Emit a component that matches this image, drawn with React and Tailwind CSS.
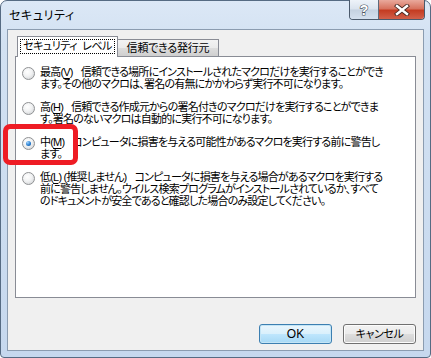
import React from 'react'

const Radio = ({ checked }) => (
  <div className="relative w-[13px] h-[13px] shrink-0 rounded-full border border-[#8f9193] bg-[radial-gradient(circle_at_40%_35%,#ffffff_0%,#f1f2f3_45%,#c9cbce_100%)]">
    {checked && (
      <div className="absolute left-[3px] top-[3px] w-[5px] h-[5px] rounded-full bg-[radial-gradient(circle_at_35%_30%,#9fd3ff_0%,#2a7fd0_55%,#0c4b93_100%)]" />
    )}
  </div>
)

const Key = ({ children }) => <span className="underline underline-offset-2">{children}</span>

const Option = ({ checked, children }) => (
  <div className="flex items-start">
    <div className="mt-[1px]">
      <Radio checked={checked} />
    </div>
    <div className="ml-[5px] leading-[12px] whitespace-nowrap">{children}</div>
  </div>
)

export default function App() {
  return (
    <div className="w-[431px] h-[358px] bg-white font-['Liberation_Sans','Noto_Sans_CJK_JP',sans-serif] text-[12px] text-black [font-feature-settings:'palt'] relative">
      {/* window frame */}
      <div className="w-[431px] h-[358px] rounded-t-[7px] rounded-b-[4px] border border-[#566b83] bg-[linear-gradient(180deg,#dce8f6_0%,#d2e1f2_12%,#c6d8ee_100%)] px-[6px] pb-[6px] flex flex-col">
        {/* title bar */}
        <div className="h-[28px] flex items-start relative">
          <div className="pl-[2px] pt-[6px] text-[12px] tracking-[0.6px]">セキュリティ</div>
          <div className="absolute right-[-1px] top-[-1px] flex h-[20px] rounded-b-[4px] border border-t-0 border-[#4b5a6c] overflow-hidden">
            <div className="w-[29px] h-full flex items-center justify-center border-r border-[#5d6b7c] bg-[linear-gradient(180deg,#eef3f9_0%,#dae3ee_48%,#c4d1e0_52%,#d4e0ee_100%)]">
              <svg width="12" height="14" viewBox="0 0 12 14">
                <text x="6" y="12" textAnchor="middle" fontSize="14" fontWeight="bold" fontFamily="Liberation Sans, sans-serif" fill="#ffffff" stroke="#4b5663" strokeWidth="1.2" paintOrder="stroke">?</text>
              </svg>
            </div>
            <div className="w-[45px] h-full flex items-center justify-center bg-[linear-gradient(180deg,#e9a99c_0%,#d7735f_45%,#c43c22_55%,#d2604a_100%)]">
              <svg width="16" height="12" viewBox="0 0 16 12">
                <path d="M3 2 L13 10 M13 2 L3 10" stroke="#4a2a24" strokeWidth="4.2" strokeLinecap="square" />
                <path d="M3 2 L13 10 M13 2 L3 10" stroke="#ffffff" strokeWidth="2.4" strokeLinecap="square" />
              </svg>
            </div>
          </div>
        </div>

        {/* client area */}
        <div className="flex-1 border border-[#8b9cb0] bg-[#f0f0f0] px-[7px] pt-[6px] flex flex-col">
          {/* tabs */}
          <div className="flex items-end h-[20px] pl-[2px] relative z-10">
            <div className="h-[21px] w-[101px] mb-[-1px] bg-white border border-b-0 border-[#898c95] flex items-start justify-center pt-[2px]">
              <div className="border border-dotted border-black h-[15px] leading-[13px] text-[11px] tracking-[-0.5px] w-[95px] text-center whitespace-nowrap">セキュリティ&nbsp;&nbsp;レベル</div>
            </div>
            <div className="h-[17px] w-[102px] ml-[-1px] bg-[linear-gradient(180deg,#f3f3f3_0%,#ebebeb_50%,#dddddd_51%,#cfcfcf_100%)] border border-b-0 border-[#898c95] flex items-center justify-center leading-[14px] text-[11px] tracking-[-0.2px] whitespace-nowrap">信頼できる発行元</div>
          </div>

          {/* panel */}
          <div className="h-[242px] bg-white border border-[#898c95] pl-[6px] pt-[9px] flex flex-col gap-[11px] text-[11px] tracking-[-0.8px]">
            <Option>
              最高(<Key>V</Key>)<span className="ml-[8px]">信頼できる場所にインストールされたマクロだけを実行することができ</span>
              <br />
              ます。その他のマクロは、署名の有無にかかわらず実行不可になります。
            </Option>
            <Option>
              高(<Key>H</Key>)<span className="ml-[8px]">信頼できる作成元からの署名付きのマクロだけを実行することができま</span>
              <br />
              す。署名のないマクロは自動的に実行不可になります。
            </Option>
            <Option checked>
              中(<Key>M</Key>)<span className="ml-[8px]">コンピュータに損害を与える可能性があるマクロを実行する前に警告し</span>
              <br />
              ます。
            </Option>
            <Option>
              低(<Key>L</Key>) (推奨しません)<span className="ml-[8px]">コンピュータに損害を与える場合があるマクロを実行する</span>
              <br />
              前に警告しません。ウイルス検索プログラムがインストールされているか、すべて
              <br />
              のドキュメントが安全であると確認した場合のみ設定してください。
            </Option>
          </div>

          {/* buttons */}
          <div className="flex justify-end gap-[11px] mt-[26px]">
            <button className="w-[73px] h-[20px] rounded-[3px] border border-[#3c7fb1] bg-[linear-gradient(180deg,#eaf6fd_0%,#d9f0fc_50%,#bee6fd_51%,#a7d9f5_100%)] shadow-[inset_0_0_0_1px_#c4e5f6] text-[12px] leading-[18px]">OK</button>
            <button className="w-[73px] h-[20px] rounded-[3px] border border-[#707070] bg-[linear-gradient(180deg,#f2f2f2_0%,#ebebeb_50%,#dddddd_51%,#cfcfcf_100%)] shadow-[inset_0_0_0_1px_#fcfcfc] text-[11px] leading-[18px] tracking-[-0.4px]">キャンセル</button>
          </div>
        </div>
      </div>

      {/* red annotation */}
      <div className="absolute left-[3px] top-[124px] w-[75px] h-[41px] rounded-[7px] border-[5px] border-[#ee1c24]" />
    </div>
  )
}
